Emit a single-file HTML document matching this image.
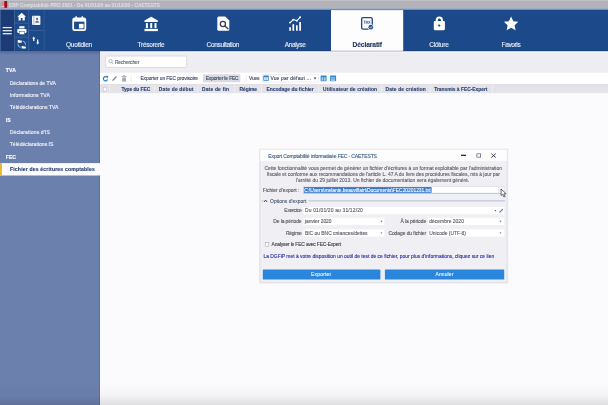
<!DOCTYPE html>
<html><head><meta charset="utf-8"><title>EBP Comptabilité PRO 2021</title>
<style>
html,body{margin:0;padding:0;}
body{width:608px;height:405px;overflow:hidden;background:#fbfbfd;font-family:"Liberation Sans",sans-serif;}
#root{position:relative;width:608px;height:405px;overflow:hidden;background:#fbfbfd;}
#root div,#root svg{position:absolute;}
.t{-webkit-text-stroke:0.12px;position:absolute;white-space:pre;line-height:1;font-family:"Liberation Sans",sans-serif;}
#txt{position:absolute;left:0;top:0;width:608px;height:405px;filter:blur(0.35px);}

</style></head>
<body>
<div id="root">
<svg id="shapes" width="608" height="405" viewBox="0 0 608 405" style="left:0;top:0;">
<defs><filter id="bl" filterUnits="userSpaceOnUse" x="-12" y="-12" width="632" height="429"><feGaussianBlur stdDeviation="0.45"/></filter></defs>
<g filter="url(#bl)">
<!-- main backgrounds -->
<rect x="99.9" y="50" width="516.1" height="22.8" fill="#ededf2"/>
<rect x="99.9" y="51.2" width="516.1" height="1.2" fill="#ffffff"/>
<rect x="99.9" y="72.8" width="516.1" height="11.6" fill="#ffffff"/>
<rect x="99.9" y="84.4" width="516.1" height="9" fill="#e3e3e8"/>
<rect x="99.9" y="84.4" width="516.1" height="0.8" fill="#dadadf"/>
<rect x="99.9" y="93.4" width="516.1" height="320" fill="#fbfbfd"/>
<!-- title bar -->
<rect x="-8" y="-8" width="624" height="17.3" fill="#b2b2ba"/>
<rect x="-8" y="-8" width="624" height="8.7" fill="#c6c6cc"/>
<defs><linearGradient id="lg" x1="0" y1="0" x2="1" y2="0"><stop offset="0" stop-color="#e58c98"/><stop offset="0.4" stop-color="#e28494"/><stop offset="0.58" stop-color="#bc162c"/><stop offset="0.78" stop-color="#8a0014"/><stop offset="1" stop-color="#9c1222"/></linearGradient></defs>
<rect x="1.3" y="1.1" width="5.9" height="6.7" fill="url(#lg)"/>
<rect x="1.7" y="6" width="2.6" height="0.9" fill="#f9cdd1"/>
<!-- nav -->
<rect x="-8" y="9.2" width="624" height="41.9" fill="#1d4a8a"/>
<rect x="-8" y="8.5" width="624" height="1.1" fill="#8fa8d2"/>
<rect x="-8" y="10" width="22.2" height="41.1" fill="#1a3a74"/>
<!-- quick icon grid lines -->
<rect x="14.2" y="10" width="0.7" height="41.1" fill="#46679f"/>
<rect x="28.4" y="10" width="0.7" height="41.1" fill="#46679f"/>
<rect x="43.8" y="10" width="0.7" height="41.1" fill="#3a5c98"/>
<rect x="14.2" y="22.8" width="14.2" height="0.7" fill="#46679f"/>
<rect x="14.2" y="36.8" width="14.2" height="0.7" fill="#46679f"/>
<rect x="28.4" y="30.2" width="15.4" height="0.7" fill="#46679f"/>
<!-- hamburger -->
<rect x="2.7" y="26.95" width="9.1" height="1.3" fill="#e4eaf5"/>
<rect x="2.7" y="30.05" width="9.1" height="1.3" fill="#e4eaf5"/>
<rect x="2.7" y="33.05" width="9.1" height="1.3" fill="#e4eaf5"/>
<!-- active tab -->
<rect x="331" y="10.1" width="72.2" height="41.2" fill="#fdfdfe"/>
<rect x="-8" y="50.6" width="624" height="0.9" fill="#141e3c" fill-opacity="0.28"/>
<!-- sidebar -->
<rect x="-8" y="51" width="107.9" height="362" fill="#6c80ae"/>
<rect x="-8" y="163.1" width="108.4" height="12.4" fill="#fbfbfd"/>
<rect x="-8" y="163.1" width="9.9" height="12.4" fill="#e8b62c"/>
<defs><linearGradient id="sh" x1="0" y1="0" x2="0" y2="1"><stop offset="0" stop-color="#1a3268" stop-opacity="0.28"/><stop offset="1" stop-color="#1a3268" stop-opacity="0"/></linearGradient></defs>
<rect x="-8" y="51" width="107.9" height="4.5" fill="url(#sh)"/>
<rect x="99.1" y="51" width="0.9" height="112.1" fill="#3c4a70" fill-opacity="0.45"/>
<rect x="99.1" y="175.5" width="0.9" height="238" fill="#3c4a70" fill-opacity="0.45"/>
<!-- search box -->
<rect x="105.6" y="56.1" width="81" height="11.3" rx="1.0" fill="#ffffff" stroke="#cfd1da" stroke-width="0.7"/>
<!-- toolbar: Exporter le FEC highlight -->
<rect x="203" y="74.3" width="37.4" height="8" fill="#dadae2"/>
<rect x="130.8" y="75" width="0.6" height="7" fill="#dfe0e7"/>
<rect x="246" y="75" width="0.6" height="7" fill="#dcdde4"/>
<!-- view combobox -->
<rect x="262.25" y="74.85" width="56.5" height="7.1" fill="#ffffff" stroke="#dcdde4" stroke-width="0.5"/>
<!-- grid header separators -->
<rect x="109.5" y="84.8" width="0.6" height="8.4" fill="#f4f4f8"/>
<rect x="154.5" y="84.8" width="0.6" height="8.4" fill="#f4f4f8"/>
<rect x="197.5" y="84.8" width="0.6" height="8.4" fill="#f4f4f8"/>
<rect x="234" y="84.8" width="0.6" height="8.4" fill="#f4f4f8"/>
<rect x="261" y="84.8" width="0.6" height="8.4" fill="#f4f4f8"/>
<rect x="318.5" y="84.8" width="0.6" height="8.4" fill="#f4f4f8"/>
<rect x="381" y="84.8" width="0.6" height="8.4" fill="#f4f4f8"/>
<rect x="430" y="84.8" width="0.6" height="8.4" fill="#f4f4f8"/>
<rect x="492" y="84.8" width="0.6" height="8.4" fill="#f4f4f8"/>
<!-- header checkbox -->
<rect x="103.3" y="87.5" width="3.3" height="3.6" fill="#fff" stroke="#b0b4c0" stroke-width="0.45"/>
<!-- ======= dialog ======= -->
<rect x="259" y="148.4" width="249.2" height="135" rx="1.2" fill="rgb(110,115,135)" fill-opacity="0.13"/>
<rect x="260.05" y="149.45" width="246.9" height="132.8" fill="#f0f0f4" stroke="#d8dae2" stroke-width="0.5"/>
<rect x="260.2" y="149.6" width="246.6" height="11.4" fill="#fdfdfe"/>
<!-- window controls -->
<rect x="461" y="154.7" width="5" height="1.3" fill="#222a3c"/>
<rect x="476.875" y="153.875" width="3.85" height="3.25" fill="none" stroke="#2a3244" stroke-width="0.55"/>
<g transform="translate(491 153.4)"><path d="M0.3 0.2L4.7 4.2M4.7 0.2L0.3 4.2" stroke="#2a3244" stroke-width="0.85" fill="none"/></g>
<!-- file field -->
<rect x="303.45" y="186.65" width="200.7" height="6.7" fill="#ffffff" stroke="#d6d8e0" stroke-width="0.5"/>
<rect x="303.2" y="192.9" width="201.2" height="0.7" fill="#7ec8cf"/>
<rect x="303.8" y="187.1" width="127.8" height="5.7" fill="#3476c6"/>
<rect x="498.5" y="187" width="5.4" height="5.9" fill="#f4f4f7"/>
<rect x="500.4" y="189.2" width="1.7" height="1.1" fill="#9a9ca6"/>
<rect x="498.3" y="187" width="0.5" height="5.9" fill="#d6d8e0"/>
<!-- options group line -->
<g transform="translate(263.6 199.4)"><path d="M0.4 2.6L2 0.7L3.6 2.6" stroke="#33415e" stroke-width="1" fill="none"/></g>
<rect x="308.6" y="200.5" width="196.4" height="0.8" fill="#a3b0ca"/>
<rect x="261.6" y="200.5" width="1.8" height="0.8" fill="#a3b0ca"/>
<!-- fields -->
<rect x="303.4" y="207" width="201" height="7.2" fill="#ffffff"/>
<rect x="303.4" y="217.8" width="81" height="7.2" fill="#ffffff"/>
<rect x="427.7" y="217.8" width="76.7" height="7.2" fill="#ffffff"/>
<rect x="303.4" y="229.4" width="81" height="7.2" fill="#ffffff"/>
<rect x="427.7" y="229.4" width="76.7" height="7.2" fill="#ffffff"/>
<!-- dropdown arrows -->
<g transform="translate(493.8 209.8)"><path d="M0.6 0.2H2.6L1.6 1.6Z" fill="#56607a"/></g>
<g transform="translate(379.8 220.6)"><path d="M0.6 0.2H2.6L1.6 1.6Z" fill="#56607a"/></g>
<g transform="translate(498.8 220.6)"><path d="M0.6 0.2H2.6L1.6 1.6Z" fill="#56607a"/></g>
<g transform="translate(379.8 232.2)"><path d="M0.6 0.2H2.6L1.6 1.6Z" fill="#56607a"/></g>
<g transform="translate(498.8 232.2)"><path d="M0.6 0.2H2.6L1.6 1.6Z" fill="#56607a"/></g>
<!-- pencil on exercice -->
<g transform="translate(498.6 208.2)"><path d="M0.5 4.6L0.8 3.5L3.8 0.5L4.6 1.3L1.6 4.3Z" fill="#447db8"/></g>
<!-- checkbox -->
<rect x="265.2" y="242.7" width="3.6" height="3.5" fill="#fff" stroke="#9a9ea8" stroke-width="0.5"/>
<!-- buttons -->
<rect x="262.8" y="269.4" width="117.6" height="10.2" rx="0.6" fill="#2b86dc"/>
<rect x="384.9" y="269.4" width="119.3" height="10.2" rx="0.6" fill="#2b86dc"/>
<!-- ======= nav icons ======= -->
<!-- calendar -->
<g transform="translate(72.25 16.1) scale(1.045 1.005)"><rect x="0.9" y="2.3" width="11.6" height="11.6" rx="1.4" fill="none" stroke="#fff" stroke-width="1.7"/>
 <rect x="0.9" y="2.3" width="11.6" height="3.2" fill="#fff"/>
 <rect x="3.0" y="0.2" width="1.5" height="3" fill="#fff"/><rect x="8.9" y="0.2" width="1.5" height="3" fill="#fff"/>
 <rect x="6.4" y="7.7" width="4.4" height="4.5" fill="#fff"/></g>
<!-- bank -->
<g transform="translate(144.1 16.6) scale(1 1.1)"><path d="M7.1 0.2L13.8 3.6V5H0.4V3.6Z" fill="#fff"/>
 <rect x="1.8" y="5.9" width="2" height="4.6" fill="#fff"/><rect x="6.1" y="5.9" width="2" height="4.6" fill="#fff"/><rect x="10.4" y="5.9" width="2" height="4.6" fill="#fff"/>
 <rect x="0.4" y="11.2" width="13.4" height="2" fill="#fff"/></g>
<!-- consultation -->
<g transform="translate(216.3 15.9)"><path d="M2.5 0.5H8.8L13 4.7V13.3Q13 14.8 11.5 14.8H2.5Q1 14.8 1 13.3V2Q1 0.5 2.5 0.5Z" fill="#fff"/>
 <circle cx="6.6" cy="8.1" r="2.55" fill="none" stroke="#2c3b5c" stroke-width="1.25"/>
 <path d="M8.5 10L11.7 12.8" stroke="#2c3b5c" stroke-width="1.3" stroke-linecap="round"/></g>
<!-- analyse -->
<g transform="translate(288.7 16.5)"><rect x="0.5" y="10.7" width="1.7" height="3.55" fill="#fff"/><rect x="3.75" y="7.7" width="1.7" height="6.55" fill="#fff"/>
 <rect x="7.3" y="8.8" width="1.7" height="5.45" fill="#fff"/><rect x="10.55" y="5.5" width="1.7" height="8.75" fill="#fff"/>
 <path d="M1.35 6.1L4.6 3.1L8.15 4.2L11.4 0.8" fill="none" stroke="#fff" stroke-width="1.05" stroke-linejoin="round"/>
 <circle cx="1.35" cy="6.1" r="0.95" fill="#fff"/><circle cx="4.6" cy="3.1" r="0.95" fill="#fff"/><circle cx="8.15" cy="4.2" r="0.95" fill="#fff"/><circle cx="11.4" cy="0.8" r="1" fill="#fff"/></g>
<!-- declaratif -->
<g transform="translate(360.4 16.3)"><rect x="1.25" y="1.25" width="10.6" height="11.5" rx="1.4" fill="#fbfbfd" stroke="#2a4a80" stroke-width="1.35"/>
 <path d="M3.3 4.7H5.2M4.25 4.7V7.4M5.5 7.4L6.55 4.5L7.6 7.4M5.9 6.5H7.2M8 4.5L9.8 7.4M9.8 4.5L8 7.4" fill="none" stroke="#2a4a80" stroke-width="0.6"/>
 <circle cx="10.35" cy="10.9" r="3" fill="#fbfbfd"/>
 <circle cx="10.35" cy="10.9" r="2.35" fill="#2a5792"/>
 <path d="M9.2 10.9L10.1 11.8L11.6 10.1" fill="none" stroke="#fff" stroke-width="0.7"/></g>
<!-- lock -->
<g transform="translate(433.3 16.5)"><path d="M3.4 5.5V3.9Q3.4 1 6.05 1Q8.7 1 8.7 3.9V5.5" fill="none" stroke="#fff" stroke-width="2"/>
 <rect x="0.5" y="4.5" width="11.1" height="9.2" rx="1.1" fill="#fff"/>
 <circle cx="5.95" cy="9.1" r="1.1" fill="#1d3f78"/></g>
<!-- star -->
<g transform="translate(503.7 16.3)"><path d="M7.4 0.3L9.6 4.9L14.6 5.5L10.9 9L11.9 13.9L7.4 11.5L2.9 13.9L3.9 9L0.2 5.5L5.2 4.9Z" fill="#fff"/></g>
<!-- ======= quick icons ======= -->
<!-- home -->
<g transform="translate(17.3 12.6) scale(0.97 1.03)"><path d="M4.5 0.2L8.9 4H7.7V7.6H5.4V5.2H3.6V7.6H1.3V4H0.1Z" fill="#fff"/></g>
<!-- print -->
<g transform="translate(17 26)"><rect x="2.3" y="0.2" width="5.2" height="2.2" fill="#fff"/>
 <rect x="0.3" y="2.9" width="9.2" height="4" rx="0.8" fill="#fff"/>
 <rect x="2.3" y="5.6" width="5.2" height="3" fill="#fff" stroke="#1d4a8a" stroke-width="0.5"/></g>
<!-- windows -->
<g transform="translate(17.4 39.6)"><path d="M0.35 0.35H1.9L2.4 0.9H4.3V3.1H0.35Z" fill="#fff"/>
 <path d="M4.3 6.3H5.8L6.3 6.8H8.45V8.85H4.3Z" fill="#fff"/>
 <path d="M5.2 1.4Q8.2 1.6 8.2 5.3" fill="none" stroke="#a9c6ea" stroke-width="0.9"/>
 <path d="M0.5 4.2Q0.5 7.7 3.3 7.9" fill="none" stroke="#a9c6ea" stroke-width="0.9"/></g>
<!-- contact book -->
<g transform="translate(31.7 15.3) scale(1 1.12)"><rect x="0.3" y="0.3" width="8.4" height="8.4" rx="0.9" fill="#f0f3f9"/>
 <rect x="1.9" y="0.3" width="0.6" height="8.4" fill="#8d9cc0"/>
 <circle cx="5.4" cy="3.3" r="1.05" fill="#5d6a94"/>
 <path d="M3.6 6.7Q3.6 4.8 5.4 4.8Q7.2 4.8 7.2 6.7Z" fill="#5d6a94"/></g>
<!-- arrows up/down -->
<g transform="translate(32.2 36.4)"><path d="M1.55 0.2L3.1 2.3H2.15V4.6H0.95V2.3H0Z" fill="#fff"/>
 <path d="M5.5 8.2L3.95 6.1H4.9V3.2H6.1V6.1H7.05Z" fill="#fff"/></g>
<rect x="-8" y="10" width="8.8" height="41.1" fill="#46669f"/>
<!-- ======= toolbar icons ======= -->
<!-- search -->
<g transform="translate(108.4 59)"><circle cx="2.2" cy="2.2" r="1.7" fill="none" stroke="#8a8f9c" stroke-width="0.6"/>
 <path d="M3.4 3.5L5.1 5.3" stroke="#8a8f9c" stroke-width="0.7"/></g>
<!-- refresh -->
<g transform="translate(102.6 75.7)"><path d="M4.9 3.6A2.1 2.1 0 1 1 4.3 1.5" fill="none" stroke="#2482bf" stroke-width="1.15"/>
 <path d="M3.2 0.1L5.7 0.3L5 2.7Z" fill="#2482bf"/></g>
<!-- pencil -->
<g transform="translate(111.8 75.4)"><path d="M0.4 5.6L0.8 4.2L4.3 0.7L5.2 1.6L1.8 5.2Z" fill="#85878f"/></g>
<!-- trash -->
<g transform="translate(121.6 75.2)"><rect x="0.2" y="0.9" width="4.6" height="1" fill="#a2a4ac"/><rect x="1.6" y="0.1" width="1.8" height="0.9" fill="#a2a4ac"/>
 <rect x="0.6" y="2.4" width="3.8" height="4" fill="#a8aab2"/></g>
<!-- view icon -->
<g transform="translate(263.1 75.4) scale(1.04 1.0)"><rect x="0.2" y="0.2" width="5.2" height="5.2" rx="0.5" fill="#2f7fd0"/>
 <rect x="1" y="1.8" width="3.6" height="2.8" fill="#e8f0fb"/><rect x="2.6" y="1.8" width="0.4" height="2.8" fill="#2f7fd0"/></g>
<g transform="translate(313.6 77.6)"><path d="M0 0H2.8L1.4 1.8Z" fill="#3a4660"/></g>
<!-- two view buttons -->
<g transform="translate(320.5 75.4) scale(1.17 1.02)"><rect x="0.1" y="0.1" width="5.1" height="5.6" rx="0.4" fill="#2f86cf"/><rect x="0.9" y="2.0" width="1.5" height="1.2" fill="#d6e6f8"/><rect x="2.9" y="2.0" width="1.5" height="1.2" fill="#d6e6f8"/><rect x="0.9" y="3.8" width="1.5" height="1.2" fill="#d6e6f8"/><rect x="2.9" y="3.8" width="1.5" height="1.2" fill="#d6e6f8"/></g>
<g transform="translate(330 75.4) scale(1.13 1.02)"><rect x="0.1" y="0.1" width="5.3" height="5.6" rx="0.4" fill="#2f86cf"/><rect x="0.9" y="2.0" width="3.6" height="0.8" fill="#cfe2f7"/><rect x="0.9" y="3.3" width="3.6" height="0.8" fill="#cfe2f7"/><rect x="0.9" y="4.5" width="3.6" height="0.7" fill="#cfe2f7"/></g>
<!-- mouse cursor -->
<g transform="translate(500.6 188.6)"><path d="M0.5 0.4V7L2.1 5.6L3.3 8.4L4.5 7.9L3.3 5.2H5.5Z" fill="#fff" stroke="#30343c" stroke-width="0.7" stroke-linejoin="round"/></g>
<!-- bottom vignette -->
<defs><linearGradient id="bt" x1="0" y1="0" x2="0" y2="1"><stop offset="0" stop-color="#101018" stop-opacity="0"/><stop offset="0.55" stop-color="#101018" stop-opacity="0.03"/><stop offset="1" stop-color="#101018" stop-opacity="0.13"/></linearGradient></defs>
<rect x="-8" y="383" width="624" height="22.5" fill="url(#bt)"/>

</g>
</svg>
<!-- text layer -->
<div id="txt">
<span class="t" style="left:9.00px;top:3.51px;font-size:4.7px;letter-spacing:0.049px;color:#dadae0;font-weight:700;">EBP Comptabilité PRO 2021 - Du 01/01/20 au 31/12/20 - CAETESTS</span>
<span class="t" style="left:66.00px;top:41.92px;font-size:6.5px;letter-spacing:-0.203px;color:#e8eefa;">Quotidien</span>
<span class="t" style="left:137.50px;top:41.92px;font-size:6.5px;letter-spacing:-0.238px;color:#e8eefa;">Trésorerie</span>
<span class="t" style="left:206.55px;top:41.92px;font-size:6.5px;letter-spacing:-0.303px;color:#e8eefa;">Consultation</span>
<span class="t" style="left:284.80px;top:41.92px;font-size:6.5px;letter-spacing:-0.361px;color:#e8eefa;">Analyse</span>
<span class="t" style="left:429.20px;top:41.92px;font-size:6.5px;letter-spacing:-0.222px;color:#e8eefa;">Clôture</span>
<span class="t" style="left:501.60px;top:41.92px;font-size:6.5px;letter-spacing:-0.373px;color:#e8eefa;">Favoris</span>
<span class="t" style="left:352.50px;top:41.62px;font-size:6.7px;letter-spacing:-0.104px;color:#213560;font-weight:700;">Déclaratif</span>
<span class="t" style="left:5.80px;top:68.39px;font-size:5.1px;letter-spacing:0.126px;color:#ffffff;font-weight:700;">TVA</span>
<span class="t" style="left:9.70px;top:80.72px;font-size:5.1px;letter-spacing:-0.000px;color:#f2f4fa;">Déclarations de TVA</span>
<span class="t" style="left:9.70px;top:93.05px;font-size:5.1px;letter-spacing:0.086px;color:#f2f4fa;">Informations TVA</span>
<span class="t" style="left:9.70px;top:105.39px;font-size:5.1px;letter-spacing:0.026px;color:#f2f4fa;">Télédéclarations TVA</span>
<span class="t" style="left:5.80px;top:117.71px;font-size:5.1px;letter-spacing:-0.009px;color:#ffffff;font-weight:700;">IS</span>
<span class="t" style="left:9.70px;top:130.04px;font-size:5.1px;letter-spacing:0.112px;color:#f2f4fa;">Déclarations d&#x27;IS</span>
<span class="t" style="left:9.70px;top:142.38px;font-size:5.1px;letter-spacing:0.008px;color:#f2f4fa;">Télédéclarations IS</span>
<span class="t" style="left:5.80px;top:154.70px;font-size:5.1px;letter-spacing:0.000px;color:#ffffff;font-weight:700;">FEC</span>
<span class="t" style="left:10.00px;top:167.13px;font-size:5.1px;letter-spacing:0.167px;color:#1f3768;font-weight:700;">Fichier des écritures comptables</span>
<span class="t" style="left:114.90px;top:60.51px;font-size:4.9px;letter-spacing:-0.093px;color:#5a5f6b;">Rechercher</span>
<span class="t" style="left:140.40px;top:76.80px;font-size:4.9px;letter-spacing:-0.057px;color:#3a4660;">Exporter un FEC provisoire</span>
<span class="t" style="left:205.70px;top:76.80px;font-size:4.9px;letter-spacing:-0.130px;color:#3a4660;">Exporter le FEC</span>
<span class="t" style="left:249.00px;top:76.80px;font-size:4.9px;letter-spacing:-0.147px;color:#3a4660;">Vues</span>
<span class="t" style="left:270.40px;top:76.80px;font-size:4.9px;letter-spacing:0.194px;color:#3a4660;">Vue par défaut ...</span>
<span class="t" style="left:121.40px;top:87.61px;font-size:4.9px;letter-spacing:-0.071px;color:#2a3f73;font-weight:700;">Type du FEC</span>
<span class="t" style="left:158.80px;top:87.61px;font-size:4.9px;letter-spacing:0.192px;color:#2a3f73;font-weight:700;">Date de début</span>
<span class="t" style="left:201.90px;top:87.61px;font-size:4.9px;letter-spacing:0.214px;color:#2a3f73;font-weight:700;">Date de fin</span>
<span class="t" style="left:239.60px;top:87.61px;font-size:4.9px;letter-spacing:-0.050px;color:#2a3f73;font-weight:700;">Régime</span>
<span class="t" style="left:266.50px;top:87.61px;font-size:4.9px;letter-spacing:0.025px;color:#2a3f73;font-weight:700;">Encodage du fichier</span>
<span class="t" style="left:323.00px;top:87.61px;font-size:4.9px;letter-spacing:0.123px;color:#2a3f73;font-weight:700;">Utilisateur de création</span>
<span class="t" style="left:385.50px;top:87.61px;font-size:4.9px;letter-spacing:0.149px;color:#2a3f73;font-weight:700;">Date de création</span>
<span class="t" style="left:434.20px;top:87.61px;font-size:4.9px;letter-spacing:-0.017px;color:#2a3f73;font-weight:700;">Transmis à FEC-Expert</span>
<span class="t" style="left:268.30px;top:153.59px;font-size:5.1px;letter-spacing:-0.172px;color:#41608a;">Export Comptabilité informatisée FEC - CAETESTS</span>
<span class="t" style="left:264.40px;top:167.48px;font-size:4.95px;letter-spacing:0.019px;color:#5e5e68;">Cette fonctionnalité vous permet de générer un fichier d&#x27;écritures à un format exploitable par l&#x27;administration</span>
<span class="t" style="left:267.00px;top:173.28px;font-size:4.95px;letter-spacing:-0.014px;color:#5e5e68;">fiscale et conforme aux recommandations de l&#x27;article L. 47 A du livre des procédures fiscales, mis à jour par</span>
<span class="t" style="left:296.00px;top:179.08px;font-size:4.95px;letter-spacing:0.026px;color:#5e5e68;">l&#x27;arrêté du 29 juillet 2013. Un fichier de documentation sera également généré.</span>
<span class="t" style="left:262.80px;top:188.58px;font-size:4.95px;letter-spacing:0.009px;color:#55555f;">Fichier d&#x27;export :</span>
<span class="t" style="left:304.20px;top:188.58px;font-size:4.95px;letter-spacing:-0.041px;color:#ffffff;">C:\Users\melanie.beauvillain\Documents\FEC20201231.txt</span>
<span class="t" style="left:270.00px;top:200.28px;font-size:4.95px;letter-spacing:0.038px;color:#4a5a78;">Options d&#x27;export</span>
<span class="t" style="left:284.30px;top:209.48px;font-size:4.95px;letter-spacing:-0.210px;color:#55555f;">Exercice</span>
<span class="t" style="left:305.00px;top:209.48px;font-size:4.95px;letter-spacing:0.157px;color:#5a5a66;">Du 01/01/20 au 31/12/20</span>
<span class="t" style="left:273.20px;top:220.48px;font-size:4.95px;letter-spacing:-0.080px;color:#55555f;">De la période</span>
<span class="t" style="left:305.00px;top:220.48px;font-size:4.95px;letter-spacing:-0.031px;color:#5a5a66;">janvier 2020</span>
<span class="t" style="left:400.40px;top:220.48px;font-size:4.95px;letter-spacing:-0.052px;color:#55555f;">À la période</span>
<span class="t" style="left:429.30px;top:220.48px;font-size:4.95px;letter-spacing:0.023px;color:#5a5a66;">décembre 2020</span>
<span class="t" style="left:286.00px;top:232.28px;font-size:4.95px;letter-spacing:-0.243px;color:#55555f;">Régime</span>
<span class="t" style="left:305.00px;top:232.28px;font-size:4.95px;letter-spacing:-0.022px;color:#5a5a66;">BIC ou BNC créances/dettes</span>
<span class="t" style="left:388.40px;top:232.28px;font-size:4.95px;letter-spacing:-0.059px;color:#55555f;">Codage du fichier</span>
<span class="t" style="left:429.30px;top:232.28px;font-size:4.95px;letter-spacing:-0.004px;color:#5a5a66;">Unicode (UTF-8)</span>
<span class="t" style="left:271.60px;top:243.18px;font-size:4.95px;letter-spacing:-0.172px;color:#3c3c46;">Analyser le FEC avec FEC-Expert</span>
<span class="t" style="left:263.40px;top:255.28px;font-size:4.95px;letter-spacing:0.002px;color:#2b2fa0;">La DGFiP met à votre disposition un outil de test de ce fichier, pour plus d&#x27;informations, cliquez sur ce lien</span>
<span class="t" style="left:311.00px;top:272.98px;font-size:4.95px;letter-spacing:0.224px;color:#eef4fc;">Exporter</span>
<span class="t" style="left:435.50px;top:272.98px;font-size:4.95px;letter-spacing:0.134px;color:#eef4fc;">Annuler</span>
</div>
</div>
</body></html>
